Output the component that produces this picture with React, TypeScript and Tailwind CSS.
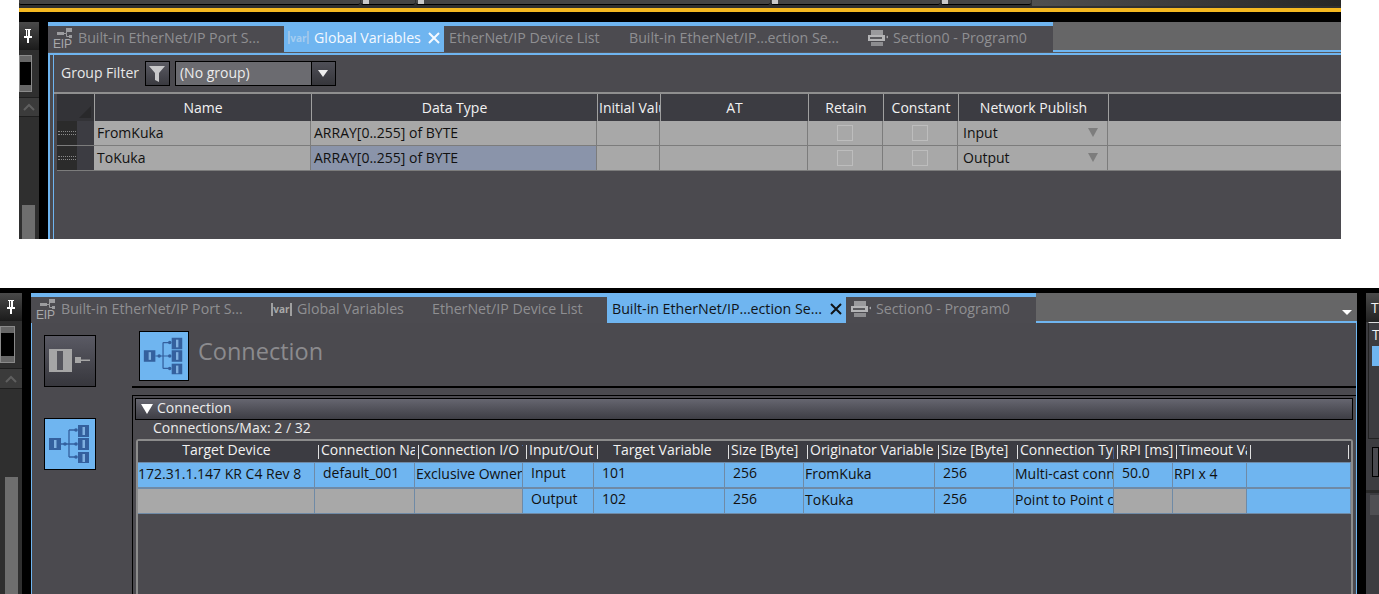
const blue = 'bg-[#6fb5f0]'

function EipIcon() {
  return (
    <svg width="20" height="20" viewBox="0 0 20 20" className="shrink-0">
      <rect x="4" y="4" width="7" height="3" fill="#9c9c9f" />
      <rect x="13" y="0" width="6" height="4" fill="#9c9c9f" />
      <rect x="16" y="7" width="3" height="3" fill="#9c9c9f" />
      <path d="M11 5.5h2.5V2M13.5 5.5v3H16" stroke="#9c9c9f" strokeWidth="1" fill="none" />
      <text x="0" y="20" fontSize="12" textLength="19" fill="#a8a8ab" fontFamily="Liberation Sans, sans-serif">EIP</text>
    </svg>
  )
}

function VarIcon({ active }: { active?: boolean }) {
  return (
    <span
      className={`flex h-[13px] w-[21px] shrink-0 items-center justify-center border-x-2 text-[10px] leading-none font-bold ${
        active ? 'border-[#9cc4e8] text-[#a5cdf0]' : 'border-[#a0a0a0] text-[#a8a8a8]'
      }`}
    >
      var
    </span>
  )
}

function DeviceIcon() {
  return (
    <svg width="21" height="18" viewBox="0 0 21 18" className="shrink-0">
      <path d="M4 1h12v5H4z" fill="#9a9a9d" />
      <rect x="1" y="6" width="17" height="6" fill="#b4b4b6" />
      <rect x="3" y="8" width="12" height="2" fill="#5a5a5e" />
      <path d="M4 13h12v4H4z" fill="#8d8d90" />
      <path d="M19 8l2-1.5v3z" fill="#a8a8aa" />
    </svg>
  )
}

function CloseIcon({ color }: { color: string }) {
  return (
    <svg width="12" height="12" viewBox="0 0 12 12" className="ml-auto mr-[4px] shrink-0">
      <path d="M1 1l10 10M11 1L1 11" stroke={color} strokeWidth="2" fill="none" />
    </svg>
  )
}

function TreeIcon() {
  return (
    <svg width="50" height="50" viewBox="0 0 50 50">
      <g fill="#34609e">
        <rect x="4" y="19" width="12" height="12" />
        <rect x="33" y="6" width="11" height="12" />
        <rect x="33" y="19" width="11" height="12" />
        <rect x="33" y="33" width="11" height="11" />
      </g>
      <g fill="#7fb0e0">
        <rect x="9" y="21" width="2.5" height="8" />
        <rect x="37.5" y="8" width="2.5" height="8" />
        <rect x="37.5" y="21" width="2.5" height="8" />
        <rect x="37.5" y="35" width="2.5" height="8" />
      </g>
      <path d="M16 25h16M24 11v27M24 11h8M24 38h8" stroke="#34609e" strokeWidth="1.3" fill="none" />
      <circle cx="20" cy="25" r="1.8" fill="#34609e" />
      <circle cx="31" cy="11" r="1.8" fill="#34609e" />
      <circle cx="31" cy="25" r="1.8" fill="#34609e" />
      <circle cx="31" cy="38" r="1.8" fill="#34609e" />
    </svg>
  )
}

function PinIcon() {
  return (
    <svg width="8" height="14" viewBox="0 0 8 14">
      <path d="M1 0h6v1H6v6h2v2H5v5H3V9H0V7h2V1H1z" fill="#fff" />
      <rect x="3" y="1" width="1" height="6" fill="#444" />
    </svg>
  )
}

function DeviceThumb({ w }: { w: string }) {
  return (
    <div className={`${w} flex h-[37px] flex-col justify-between border border-[#8a8a8a] bg-black`}>
      <div className="h-[6px] bg-[#666]" />
      <div className="h-[6px] bg-[#666]" />
    </div>
  )
}

function UpChevron() {
  return (
    <svg width="12" height="8" viewBox="0 0 12 8">
      <path d="M1 7l5-5 5 5" stroke="#5f5f5f" strokeWidth="2" fill="none" />
    </svg>
  )
}

function Tab({
  width,
  icon,
  label,
  active,
  closeColor,
  pad,
}: {
  width: string
  icon?: React.ReactNode
  label: string
  active?: boolean
  closeColor?: string
  pad: string
}) {
  return (
    <div
      className={`${width} ${pad} flex shrink-0 items-center gap-[5px] whitespace-nowrap text-[14.2px] ${
        active ? `${blue} border-t-4 border-[#6fb5f0]` : 'border-t-4 border-[#6fb5f0] bg-[#4c4b50] text-[#8f8f92]'
      }`}
    >
      {icon}
      <span>{label}</span>
      {closeColor && <CloseIcon color={closeColor} />}
    </div>
  )
}

const topCols = [
  { w: 'w-[217px]', head: 'Name' },
  { w: 'w-[286px]', head: 'Data Type' },
  { w: 'w-[63px]', head: 'Initial Value' },
  { w: 'w-[148px]', head: 'AT' },
  { w: 'w-[75px]', head: 'Retain' },
  { w: 'w-[75px]', head: 'Constant' },
  { w: 'w-[150px]', head: 'Network Publish' },
  { w: 'flex-1', head: '' },
]

function GlobalVarRow({ name, publish, selected }: { name: string; publish: string; selected?: boolean }) {
  const cell = 'flex h-full items-center overflow-hidden whitespace-nowrap border-r border-[#7c7c7c]'
  const grey = 'bg-[#a8a8a8]'
  const box = <span className="h-[16px] w-[16px] border border-[#bdbdbd]" />
  return (
    <div className="flex h-[25px] shrink-0 border-b border-[#7c7c7c] text-[14px] text-[#111]">
      <div className="flex h-full w-[37px] shrink-0 bg-[#3c3c42]">
        <div className="flex h-full w-[20px] items-center justify-center bg-[#2b2b2b]">
          <span className="h-[4px] w-[18px] border-y border-dotted border-[#8a8a8a]" />
        </div>
      </div>
      <div className={`${cell} ${grey} w-[217px] pb-[2px] pl-[3px]`}>{name}</div>
      <div className={`${cell} ${selected ? 'bg-[#8a94aa]' : grey} w-[286px] pb-[2px] pl-[3px]`}>ARRAY[0..255] of BYTE</div>
      <div className={`${cell} ${grey} w-[63px]`} />
      <div className={`${cell} ${grey} w-[148px]`} />
      <div className={`${cell} ${grey} w-[75px] justify-center`}>{box}</div>
      <div className={`${cell} ${grey} w-[75px] justify-center`}>{box}</div>
      <div className={`${cell} ${grey} w-[150px] justify-between pb-[2px] pl-[5px] pr-[9px]`}>
        <span>{publish}</span>
        <span className="h-0 w-0 border-x-[5px] border-t-[9px] border-x-transparent border-t-[#7d7d7d]" />
      </div>
      <div className="h-full flex-1 bg-[#a8a8a8]" />
    </div>
  )
}

function GlobalVariablesShot() {
  return (
    <section className="ml-[19px] flex h-[239px] w-[1322px] flex-col overflow-hidden bg-black">
      {/* toolbar remnant */}
      <div className="flex h-[8px] shrink-0 gap-[1px] bg-[#303030] pb-[2px]">
        <div className="h-[5px] w-[341px] rounded-b-[2px] border-b border-black bg-[#454545]" />
        <div className="h-[5px] w-[54px] rounded-b-[2px] border-b border-black bg-[#454545] pl-[2px]">
          <div className="h-[4px] w-[6px] bg-[#c9c9c9]" />
        </div>
        <div className="h-[5px] w-[354px] rounded-b-[2px] border-b border-black bg-[#454545] pl-[2px]">
          <div className="h-[4px] w-[6px] bg-[#c9c9c9]" />
        </div>
        <div className="h-[5px] w-[169px] rounded-b-[2px] border-b border-black bg-[#454545] pl-[1px]">
          <div className="h-[4px] w-[6px] bg-[#c9c9c9]" />
        </div>
        <div className="h-[5px] w-[90px] rounded-b-[2px] border-b border-black bg-[#454545] pl-[1px]">
          <div className="h-[4px] w-[6px] bg-[#c9c9c9]" />
        </div>
        <div className="h-[6px] flex-1 bg-gradient-to-r from-[#505050] to-[#262626]" />
      </div>
      <div className="h-[4px] shrink-0 bg-[#f5b921]" />
      <div className="h-[10px] shrink-0 bg-black" />

      <div className="flex min-h-0 flex-1">
        {/* left pane */}
        <div className="flex w-[20px] shrink-0 flex-col bg-[#2f2f2f]">
          <div className="flex h-[28px] shrink-0 items-center justify-end bg-gradient-to-b from-[#4a4a4a] to-[#1b1b1b] pr-[7px]">
            <PinIcon />
          </div>
          <div className="mt-[5px]">
            <DeviceThumb w="w-[13px]" />
          </div>
          <div className="mt-[5px] flex h-[20px] shrink-0 items-center justify-center border-y border-[#1e1e1e] bg-[#3b3b3b]">
            <UpChevron />
          </div>
          <div className="ml-[3px] mt-[88px] w-[13px] flex-1 bg-[#6e6e6e]" />
        </div>
        <div className="w-[9px] shrink-0 bg-black" />

        {/* document */}
        <div className="flex min-w-0 flex-1 flex-col bg-[#4b4a4f]">
          <div className="flex h-[30px] shrink-0 bg-[#666667]">
            <Tab width="w-[236px]" pad="pl-[5px] pb-[3px]" icon={<EipIcon />} label="Built-in EtherNet/IP Port S..." />
            <Tab width="w-[160px]" pad="pl-[4px] pb-[3px] text-[#f4f9ff]" icon={<VarIcon active />} label="Global Variables" active closeColor="#f4f9ff" />
            <Tab width="w-[171px]" pad="pl-[5px] pb-[3px]" label="EtherNet/IP Device List" />
            <Tab width="w-[244px]" pad="pl-[14px] pb-[3px]" label="Built-in EtherNet/IP...ection Se..." />
            <Tab width="w-[194px]" pad="pl-[8px] pb-[3px]" icon={<DeviceIcon />} label="Section0 - Program0" />
            <div className="flex-1 border-b-2 border-[#6fb5f0]" />
          </div>
          <div className="h-[1px] shrink-0 bg-[#58585c]" />
          <div className={`h-[2px] shrink-0 ${blue}`} />
          <div className="flex min-h-0 flex-1">
            <div className="w-[2px] shrink-0 bg-[#6fb5f0]" />
            <div className="w-[3px] shrink-0 bg-[#4b4a4f]" />
            <div className="w-[1px] shrink-0 bg-[#6fb5f0]" />
            <div className="flex min-w-0 flex-1 flex-col">
              <div className="flex h-[37px] shrink-0 items-center pl-[7px] text-[14px] text-[#e8e8e8]">
                <span className="pb-[2px]">Group Filter</span>
                <div className="ml-[6px] flex h-[25px] w-[25px] items-center justify-center border border-black bg-gradient-to-b from-[#5a5a62] to-[#3a3a40]">
                  <svg width="16" height="17" viewBox="0 0 16 17">
                    <path d="M0 1h16l-6 7v9l-4-2V8z" fill="#c8c8ca" />
                  </svg>
                </div>
                <div className="ml-[5px] flex h-[25px] w-[161px] border border-black">
                  <div className="flex flex-1 items-center bg-[#6b6b70] pb-[2px] pl-[4px] text-[#ececec]">(No group)</div>
                  <div className="flex w-[24px] items-center justify-center border-l border-black bg-gradient-to-b from-[#4f4f57] to-[#36363b]">
                    <span className="h-0 w-0 border-x-[5px] border-t-[7px] border-x-transparent border-t-[#eee]" />
                  </div>
                </div>
              </div>
              <div className="h-[2px] shrink-0 bg-[#8f8f8f]" />
              <div className="flex min-h-0 flex-1 flex-col pl-[3px]">
                <div className="flex h-[27px] shrink-0 bg-[#3c3c42] text-[14px] text-[#f2f2f2]">
                  <div className="relative h-full w-[37px] shrink-0 bg-[#333337]">
                    <span className="absolute bottom-[3px] right-[3px] h-0 w-0 border-b-[12px] border-l-[12px] border-b-[#29292b] border-l-transparent" />
                  </div>
                  {topCols.map((c) => (
                    <div
                      key={c.head || 'rest'}
                      className={`${c.w} flex h-full items-center justify-center overflow-hidden whitespace-nowrap border-l border-[#a0a0a0]`}
                    >
                      {c.head === 'Initial Value' ? <span className="w-full pl-[1px]">{c.head}</span> : c.head}
                    </div>
                  ))}
                </div>
                <GlobalVarRow name="FromKuka" publish="Input" />
                <GlobalVarRow name="ToKuka" publish="Output" selected />
              </div>
            </div>
          </div>
        </div>
      </div>
    </section>
  )
}

const connCols = [
  { w: 'w-[177px]', head: 'Target Device', center: true, tick: false },
  { w: 'w-[100px]', head: 'Connection Name' },
  { w: 'w-[108px]', head: 'Connection I/O Type' },
  { w: 'w-[71px]', head: 'Input/Output' },
  { w: 'w-[131px]', head: 'Target Variable', center: true },
  { w: 'w-[79px]', head: 'Size [Byte]' },
  { w: 'w-[131px]', head: 'Originator Variable' },
  { w: 'w-[79px]', head: 'Size [Byte]' },
  { w: 'w-[100px]', head: 'Connection Type' },
  { w: 'w-[59px]', head: 'RPI [ms]' },
  { w: 'w-[74px]', head: 'Timeout Value' },
  { w: 'flex-1', head: '' },
]

type ConnCell = { text?: string; grey?: boolean; pad: string }

const connRows: ConnCell[][] = [
  [
    { text: '172.31.1.147 KR C4 Rev 8', pad: 'pl-0 pb-[4px]' },
    { text: 'default_001', pad: 'pl-[8px] pb-[5px]' },
    { text: 'Exclusive Owner', pad: 'pl-[1px] pb-[4px]' },
    { text: 'Input', pad: 'pl-[8px] pb-[5px]' },
    { text: '101', pad: 'pl-[8px] pb-[5px]' },
    { text: '256', pad: 'pl-[8px] pb-[5px]' },
    { text: 'FromKuka', pad: 'pl-[1px] pb-[4px]' },
    { text: '256', pad: 'pl-[8px] pb-[5px]' },
    { text: 'Multi-cast connection', pad: 'pl-[1px] pb-[4px]' },
    { text: '50.0', pad: 'pl-[8px] pb-[5px]' },
    { text: 'RPI x 4', pad: 'pl-[1px] pb-[4px]' },
    { pad: '' },
  ],
  [
    { grey: true, pad: '' },
    { grey: true, pad: '' },
    { grey: true, pad: '' },
    { text: 'Output', pad: 'pl-[8px] pb-[5px]' },
    { text: '102', pad: 'pl-[8px] pb-[5px]' },
    { text: '256', pad: 'pl-[8px] pb-[5px]' },
    { text: 'ToKuka', pad: 'pl-[1px] pb-[4px]' },
    { text: '256', pad: 'pl-[8px] pb-[5px]' },
    { text: 'Point to Point connection', pad: 'pl-[1px] pb-[4px]' },
    { grey: true, pad: '' },
    { grey: true, pad: '' },
    { pad: '' },
  ],
]

function ConnectionTable() {
  return (
    <div className="ml-[3px] mr-[3px] flex min-h-0 flex-1 flex-col rounded-t-[3px] border-x-2 border-t-2 border-[#8c8c8c]">
      <div className="flex h-[21px] shrink-0 bg-[#3c3c42] text-[14px] text-[#f2f2f2]">
        {connCols.map((c, i) => (
          <div key={i} className={`${c.w} flex h-full items-center overflow-hidden whitespace-nowrap`}>
            {c.tick !== false && <span className="ml-[3px] mr-[2px] h-[14px] w-[1px] shrink-0 bg-[#e0e0e0]" />}
            <span className={`pb-[4px] ${c.center ? 'flex-1 text-center' : ''}`}>{c.head}</span>
            {i === connCols.length - 1 && <span className="ml-auto mr-[2px] h-[14px] w-[1px] bg-[#e0e0e0]" />}
          </div>
        ))}
      </div>
      {connRows.map((row, r) => (
        <div key={r} className="flex h-[26px] shrink-0 border-y border-[#6f8aa6] text-[14px] text-[#111]">
          {row.map((cell, i) => (
            <div
              key={i}
              className={`${connCols[i].w} ${cell.pad} flex h-full items-center overflow-hidden whitespace-nowrap border-r border-[#6f8aa6] ${
                cell.grey ? 'bg-[#a8a8a8]' : blue
              }`}
            >
              {cell.text}
            </div>
          ))}
        </div>
      ))}
    </div>
  )
}

function ConnectionShot() {
  return (
    <section className="mt-[49px] flex h-[306px] w-[1379px] flex-col overflow-hidden bg-black pt-[5px]">
      <div className="flex min-h-0 flex-1">
        {/* left pane */}
        <div className="flex w-[22px] shrink-0 flex-col bg-[#2f2f2f]">
          <div className="flex h-[28px] shrink-0 items-center justify-end bg-gradient-to-b from-[#4a4a4a] to-[#1b1b1b] pr-[7px]">
            <PinIcon />
          </div>
          <div className="mt-[5px]">
            <DeviceThumb w="w-[15px]" />
          </div>
          <div className="mt-[5px] flex h-[21px] shrink-0 items-center justify-center border-y border-[#1e1e1e] bg-[#3b3b3b]">
            <UpChevron />
          </div>
          <div className="ml-[5px] mt-[88px] w-[13px] flex-1 bg-[#6e6e6e]" />
        </div>
        <div className="w-[9px] shrink-0 bg-black" />

        {/* document */}
        <div className="flex w-[1326px] shrink-0 flex-col bg-[#4b4a4f]">
          <div className="flex h-[30px] shrink-0 bg-[#666667]">
            <Tab width="w-[234px]" pad="pl-[5px] pb-[2px]" icon={<EipIcon />} label="Built-in EtherNet/IP Port S..." />
            <Tab width="w-[153px]" pad="pl-[6px] pb-[2px]" icon={<VarIcon />} label="Global Variables" />
            <Tab width="w-[189px]" pad="pl-[14px] pb-[2px]" label="EtherNet/IP Device List" />
            <Tab width="w-[239px]" pad="pl-[5px] pb-[2px] text-[#101418]" label="Built-in EtherNet/IP...ection Se..." active closeColor="#101418" />
            <Tab width="w-[190px]" pad="pl-[4px] pb-[2px]" icon={<DeviceIcon />} label="Section0 - Program0" />
            <div className="relative flex-1 self-stretch border-b-2 border-[#6fb5f0]">
              <span className="absolute bottom-[6px] right-[5px] h-0 w-0 border-x-[5px] border-t-[5px] border-x-transparent border-t-white" />
            </div>
          </div>
          <div className="flex min-h-0 flex-1 border-x border-[#6fb5f0]">
            <div className="flex w-[100px] shrink-0 flex-col gap-[31px] pl-[12px] pt-[12px]">
              <button className="flex h-[52px] w-[52px] items-center justify-center border border-black bg-gradient-to-b from-[#5a5a64] to-[#37373d]">
                <svg width="42" height="24" viewBox="0 0 42 24">
                  <rect x="0" y="0" width="23" height="23" fill="#a6a6a6" />
                  <rect x="8" y="2" width="6" height="19" fill="#55555c" />
                  <rect x="26" y="8" width="6" height="6" fill="#a6a6a6" />
                  <rect x="32" y="10.5" width="9" height="1.5" fill="#a6a6a6" />
                </svg>
              </button>
              <button className={`flex h-[52px] w-[52px] items-center justify-center border border-black ${blue}`}>
                <TreeIcon />
              </button>
            </div>
            <div className="flex min-w-0 flex-1 flex-col">
              <div className="mt-[8px] flex h-[57px] shrink-0 border-b-2 border-black pl-[7px]">
                <div className={`flex h-[50px] w-[50px] items-center justify-center border border-black ${blue}`}>
                  <TreeIcon />
                </div>
                <span className="ml-[9px] mt-[2px] text-[23.5px] leading-[36px] text-[#8b8b8e]">Connection</span>
              </div>
              <div className="mt-[7px] flex min-h-0 flex-1 flex-col border-l border-t border-black pt-[2px]">
                <div className="ml-[2px] mr-[3px] flex h-[22px] shrink-0 items-center gap-[4px] border border-black bg-gradient-to-b from-[#666670] to-[#3e3e45] pl-[5px] text-[14px] text-[#ececec]">
                  <span className="h-0 w-0 border-x-[6px] border-t-[10px] border-x-transparent border-t-white" />
                  <span className="pb-[4px]">Connection</span>
                </div>
                <div className="flex h-[19px] shrink-0 items-center pb-[4px] pl-[20px] text-[14px] text-[#ececec]">
                  Connections/Max: 2 / 32
                </div>
                <ConnectionTable />
              </div>
            </div>
          </div>
        </div>
        <div className="w-[9px] shrink-0 bg-black" />

        {/* right pane */}
        <div className="flex min-w-0 flex-1 flex-col bg-[#3c3c40] text-[14px] text-[#f2f2f2]">
          <div className="flex h-[29px] shrink-0 items-center overflow-hidden whitespace-nowrap bg-gradient-to-b from-[#4a4a4a] to-[#222] pl-[5px]">
            Toolbox
          </div>
          <div className="ml-[2px] flex h-[117px] shrink-0 flex-col overflow-hidden whitespace-nowrap border-l border-t border-b border-t-[#ddd] border-l-[#222] border-b-[#222] pl-[3px] pt-[1px] leading-[22px]">
            Tag
            <div className={`h-[20px] shrink-0 ${blue}`} />
          </div>
          <div className="ml-[6px] mt-[8px] h-[30px] shrink-0 border border-black bg-[#4a4a50]" />
          <div className="mt-[13px] h-[3px] shrink-0 bg-[#2a2a2a]" />
          <div className="ml-[4px] mt-[2px] h-[20px] shrink-0 bg-[#4f4f53]" />
        </div>
      </div>
    </section>
  )
}

export default function App() {
  return (
    <div className="h-[594px] w-[1379px] overflow-hidden bg-white font-['Open_Sans',sans-serif]">
      <GlobalVariablesShot />
      <ConnectionShot />
    </div>
  )
}
